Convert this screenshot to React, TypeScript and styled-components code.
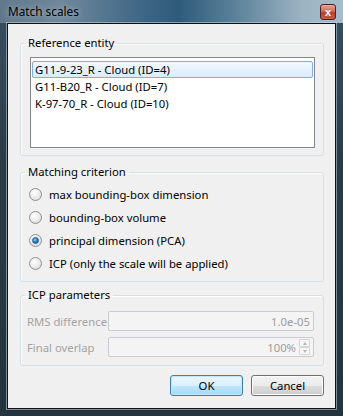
import React from 'react'
import styled, { createGlobalStyle } from 'styled-components'

const FONT = `"Noto Sans", "Open Sans", Arial, sans-serif`
const SIZE = '11.3px'

const GlobalStyle = createGlobalStyle`
  html, body {
    margin: 0;
    padding: 0;
    background: #2c3f4b;
  }
  body {
    font-family: ${FONT};
    font-size: ${SIZE};
    line-height: 15px;
  }
`

const Window = styled.div`
  width: 343px;
  height: 416px;
  box-sizing: border-box;
  display: flex;
  flex-direction: column;
  padding: 0 7px 7px 7px;
  background:
    linear-gradient(90deg, #60788a 0%, #6f889b 18%, #3d6685 42%, #2f5b7b 52%, #5a8099 68%, #9cb3c2 88%, #a8bdca 100%) top / 100% 23px no-repeat,
    linear-gradient(180deg, #3a5060 0%, #2a3b46 40%, #24343e 100%);
`

const TitleBar = styled.div`
  height: 23px;
  flex: none;
  display: flex;
  align-items: center;
  justify-content: space-between;
  padding: 0 0 0 1px;
`

const Title = styled.span`
  color: #000;
  font-size: 11.8px;
  text-shadow: 0 0 6px rgba(255, 255, 255, 0.6);
`

const CloseButton = styled.div`
  width: 14px;
  height: 14px;
  margin-top: 1px;
  border: 1px solid #4d2520;
  border-radius: 3px;
  background: linear-gradient(180deg, #e9a698 0%, #d06a5a 45%, #b8402f 55%, #c65a45 100%);
  color: #fff;
  font: bold 11px/14px Arial, sans-serif;
  text-align: center;
`

const Client = styled.div`
  flex: 1;
  display: flex;
  flex-direction: column;
  background: #f0f0f0;
  border: 1px solid #111;
  box-shadow: 0 0 0 1px rgba(200, 215, 225, 0.55);
  padding: 12px 11px 0 12px;
`

const Group = styled.fieldset<{ $gap?: number }>`
  margin: ${(p) => p.$gap ?? 0}px 0 0 0;
  padding: 0;
  border: 1px solid #d5dfe5;
  border-radius: 3px;
  box-shadow: inset 1px 1px 0 #fff;
  min-width: 0;
`

const Legend = styled.legend`
  margin-left: 4px;
  padding: 0 3px;
  line-height: 14px;
  color: #000;
`

const ListBox = styled.div`
  margin: 7px 8px 7px 9px;
  height: 91px;
  box-sizing: border-box;
  border: 1px solid #828790;
  background: #fff;
  padding: 3px 1px;
`

const ListItem = styled.div<{ $selected?: boolean }>`
  height: 17px;
  line-height: 16px;
  padding: 0 2px;
  box-sizing: border-box;
  border: 1px solid ${(p) => (p.$selected ? '#84acdd' : 'transparent')};
  border-radius: 2px;
  background: ${(p) => (p.$selected ? 'linear-gradient(180deg, #f2f8fe 0%, #dcebfc 100%)' : 'none')};
  white-space: nowrap;
`

const RadioList = styled.div`
  padding: 4px 0 6px 8px;
`

const RadioRow = styled.label`
  display: flex;
  align-items: center;
  height: 23px;
  gap: 7px;
  white-space: nowrap;
`

const RadioDot = styled.span<{ $checked?: boolean }>`
  width: 11px;
  height: 11px;
  border-radius: 50%;
  border: 1px solid #8f8f8f;
  background: radial-gradient(circle at 40% 35%, #ffffff 0%, #f0f0f0 40%, #d2d2d2 100%);
  display: flex;
  align-items: center;
  justify-content: center;
  &::after {
    content: '';
    display: ${(p) => (p.$checked ? 'block' : 'none')};
    width: 5px;
    height: 5px;
    border-radius: 50%;
    background: radial-gradient(circle at 40% 35%, #8fd0f5 0%, #2a7fc0 50%, #0b4f8c 100%);
    border: 1px solid #1c5a92;
  }
`

const ParamGrid = styled.div`
  display: grid;
  grid-template-columns: 81px 1fr;
  row-gap: 6px;
  align-items: center;
  padding: 9px 9px 8px 6px;
`

const ParamLabel = styled.span`
  color: #a3a3a3;
  white-space: nowrap;
`

const Field = styled.div`
  height: 20px;
  box-sizing: border-box;
  border: 1px solid #c9cdd1;
  border-radius: 2px;
  background: #f4f4f4;
  color: #9d9d9d;
  display: flex;
  align-items: center;
  justify-content: flex-end;
  padding: 0 3px 0 4px;
  gap: 3px;
`

const Spinner = styled.div`
  width: 11px;
  height: 16px;
  display: flex;
  flex-direction: column;
`

const SpinHalf = styled.div<{ $up?: boolean }>`
  flex: 1;
  border: 1px solid #d6d6d6;
  border-radius: 1px;
  background: #f7f7f7;
  display: flex;
  align-items: center;
  justify-content: center;
  &::after {
    content: '';
    border-left: 2.5px solid transparent;
    border-right: 2.5px solid transparent;
    ${(p) => (p.$up ? 'border-bottom: 3px solid #b4b4b4;' : 'border-top: 3px solid #b4b4b4;')}
  }
`

const ButtonRow = styled.div`
  display: flex;
  justify-content: flex-end;
  gap: 8px;
  margin-top: 9px;
`

const Button = styled.button<{ $default?: boolean }>`
  width: 73px;
  height: 21px;
  font: ${SIZE} ${FONT};
  color: #000;
  padding: 0;
  border-radius: 3px;
  border: 1px solid ${(p) => (p.$default ? '#3c7fb1' : '#707070')};
  background: ${(p) =>
    p.$default
      ? 'linear-gradient(180deg, #eaf6fd 0%, #d9f0fc 50%, #bee6fd 51%, #a7d9f5 100%)'
      : 'linear-gradient(180deg, #f2f2f2 0%, #ebebeb 50%, #dddddd 51%, #cfcfcf 100%)'};
  box-shadow: inset 0 0 0 1px ${(p) => (p.$default ? '#c4e5f6' : '#fcfcfc')};
`

const entities = ['G11-9-23_R - Cloud (ID=4)', 'G11-B20_R - Cloud (ID=7)', 'K-97-70_R - Cloud (ID=10)']
const criteria = [
  'max bounding-box dimension',
  'bounding-box volume',
  'principal dimension (PCA)',
  'ICP (only the scale will be applied)',
]

export default function App() {
  return (
    <>
      <GlobalStyle />
      <Window>
        <TitleBar>
          <Title>Match scales</Title>
          <CloseButton>x</CloseButton>
        </TitleBar>
        <Client>
          <Group>
            <Legend>Reference entity</Legend>
            <ListBox>
              {entities.map((e, i) => (
                <ListItem key={e} $selected={i === 0}>
                  {e}
                </ListItem>
              ))}
            </ListBox>
          </Group>
          <Group $gap={9}>
            <Legend>Matching criterion</Legend>
            <RadioList>
              {criteria.map((c, i) => (
                <RadioRow key={c}>
                  <RadioDot $checked={i === 2} />
                  {c}
                </RadioRow>
              ))}
            </RadioList>
          </Group>
          <Group $gap={6}>
            <Legend>ICP parameters</Legend>
            <ParamGrid>
              <ParamLabel>RMS difference</ParamLabel>
              <Field>1.0e-05</Field>
              <ParamLabel>Final overlap</ParamLabel>
              <Field>
                100%
                <Spinner>
                  <SpinHalf $up />
                  <SpinHalf />
                </Spinner>
              </Field>
            </ParamGrid>
          </Group>
          <ButtonRow>
            <Button $default>OK</Button>
            <Button>Cancel</Button>
          </ButtonRow>
        </Client>
      </Window>
    </>
  )
}
